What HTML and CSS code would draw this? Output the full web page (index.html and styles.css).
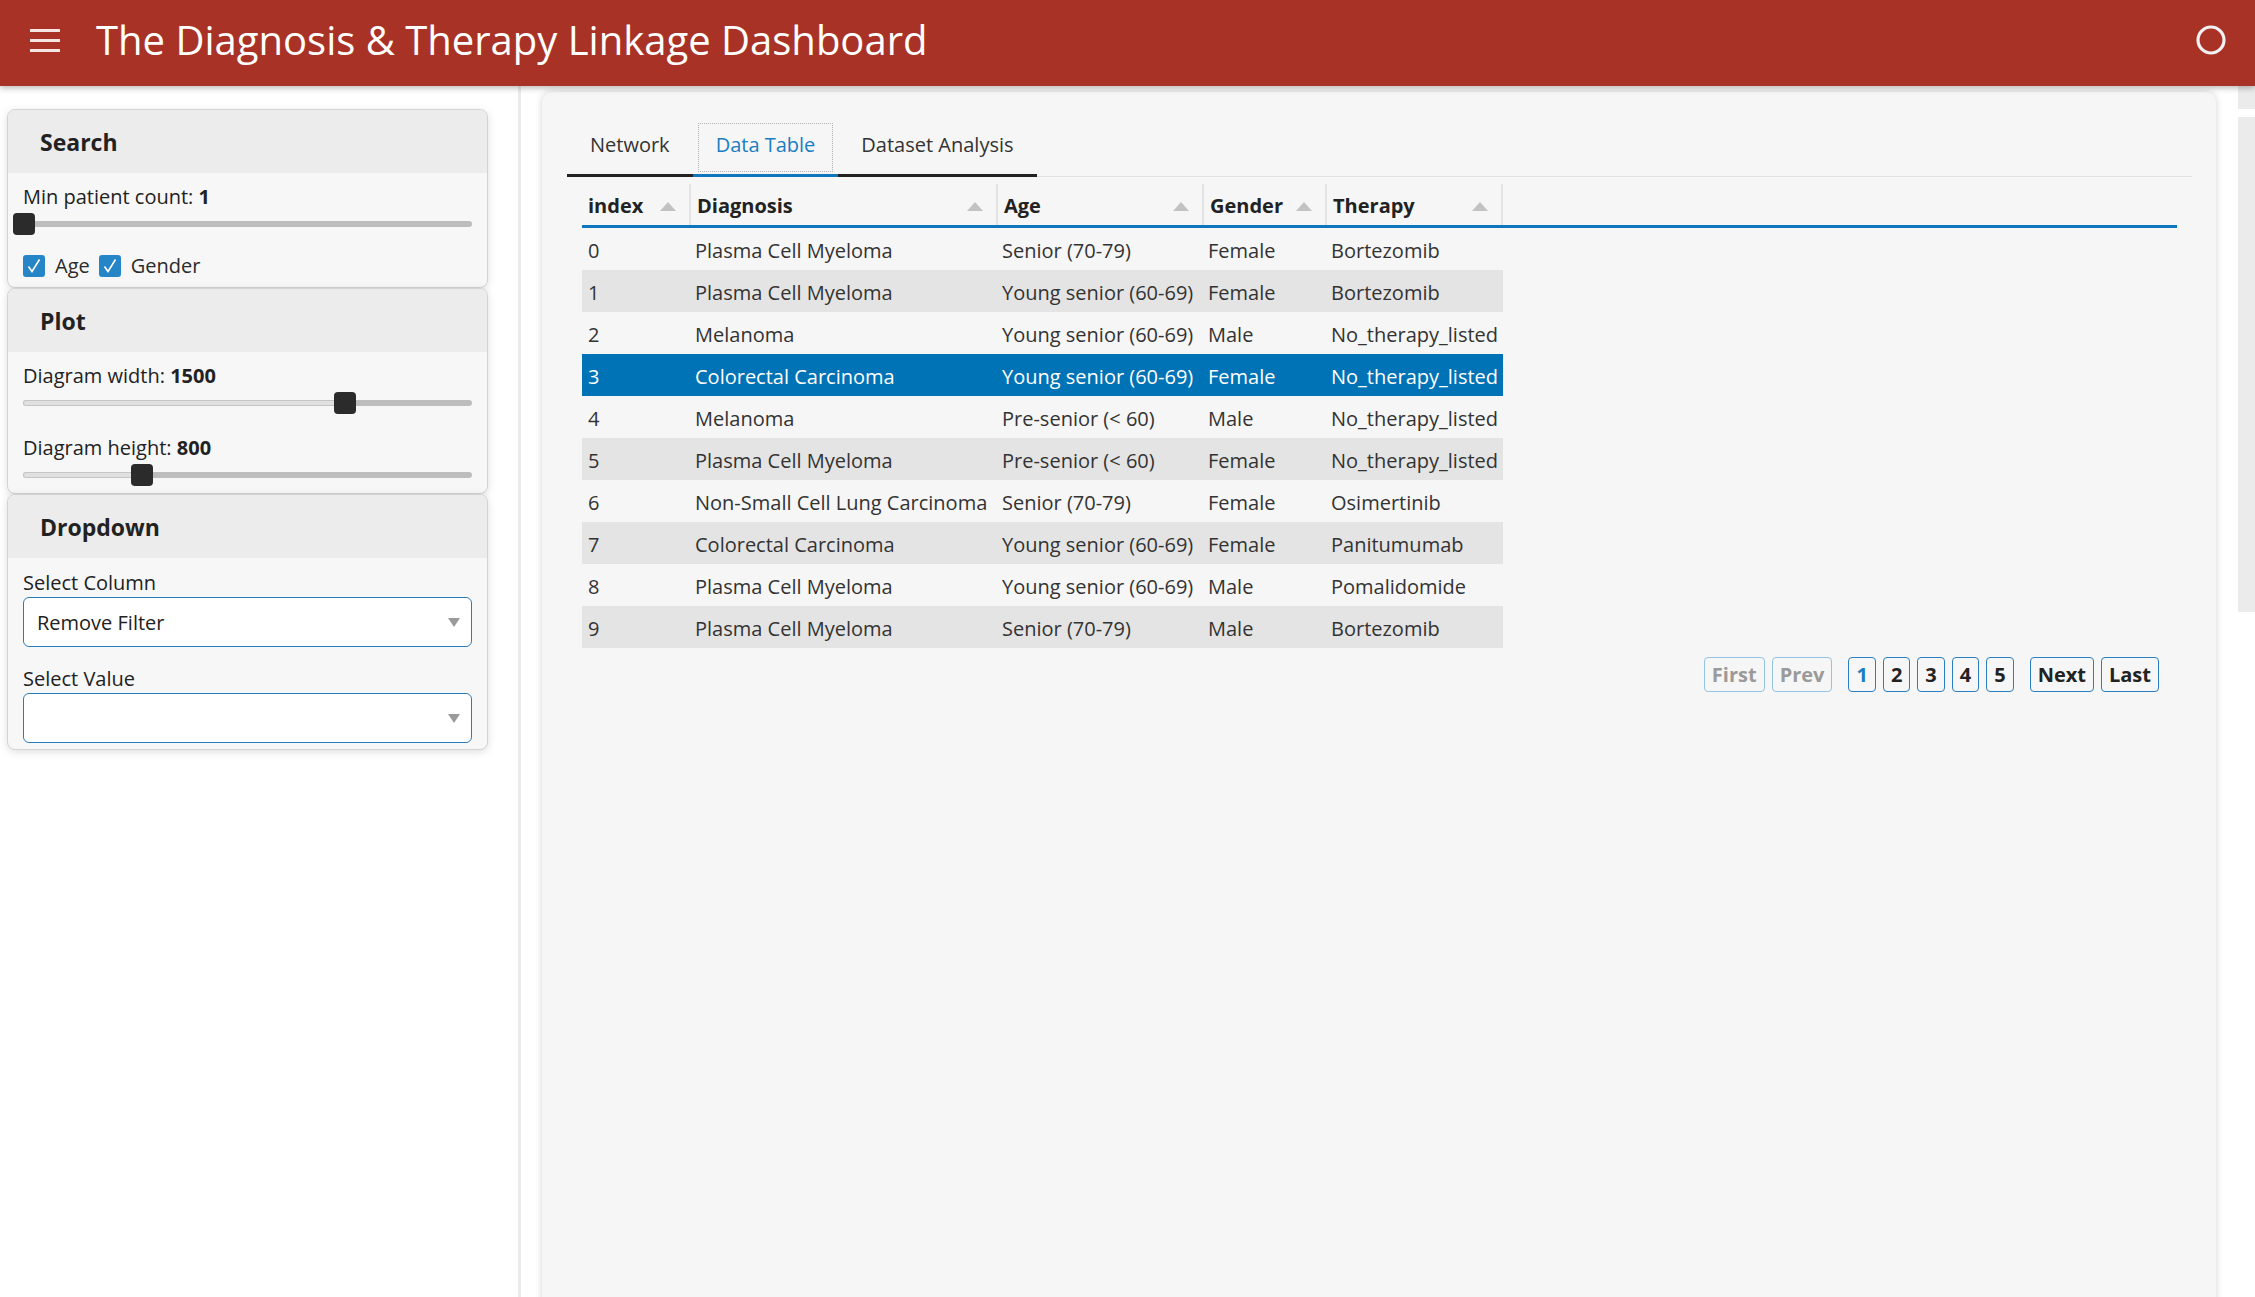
FILE: index.html
```html
<!DOCTYPE html>
<html lang="en">
<head>
<meta charset="utf-8">
<title>The Diagnosis &amp; Therapy Linkage Dashboard</title>
<link rel="stylesheet" href="styles.css">
</head>
<body>
<header class="topbar">
  <div class="burger"><span></span><span></span><span></span></div>
  <h1 class="title">The Diagnosis &amp; Therapy Linkage Dashboard</h1>
  <svg class="status" width="32" height="32" viewBox="0 0 32 32"><circle cx="16" cy="16" r="13" fill="none" stroke="#f1f1f1" stroke-width="3.2"/></svg>
</header>
<div class="layout">
  <aside class="sidebar">
    <section class="card">
      <div class="card-head">Search</div>
      <div class="card-body search-body">
        <div class="lbl">Min patient count: <b>1</b></div>
        <div class="slider" style="--v:0%"><div class="track"><div class="fill"></div></div><div class="thumb"></div></div>
        <div class="checks">
          <label class="check"><span class="box"><svg width="22" height="22" viewBox="0 0 22 22"><path d="M5.5 11.5 L9 16.5 L16.5 4.5" fill="none" stroke="#fff" stroke-width="1.6"/></svg></span>Age</label>
          <label class="check"><span class="box"><svg width="22" height="22" viewBox="0 0 22 22"><path d="M5.5 11.5 L9 16.5 L16.5 4.5" fill="none" stroke="#fff" stroke-width="1.6"/></svg></span>Gender</label>
        </div>
      </div>
    </section>
    <section class="card">
      <div class="card-head">Plot</div>
      <div class="card-body plot-body">
        <div class="lbl">Diagram width: <b>1500</b></div>
        <div class="slider" style="--v:71.5%"><div class="track"><div class="fill"></div></div><div class="thumb"></div></div>
        <div class="lbl">Diagram height: <b>800</b></div>
        <div class="slider" style="--v:26.2%"><div class="track"><div class="fill"></div></div><div class="thumb"></div></div>
      </div>
    </section>
    <section class="card">
      <div class="card-head">Dropdown</div>
      <div class="card-body dd-body">
        <div class="lbl">Select Column</div>
        <div class="select"><span>Remove Filter</span><span class="caret"></span></div>
        <div class="lbl">Select Value</div>
        <div class="select"><span></span><span class="caret"></span></div>
      </div>
    </section>
  </aside>
  <main class="main">
    <div class="panel">
      <nav class="tabs">
        <div class="tab">Network</div>
        <div class="tab active">Data Table</div>
        <div class="tab">Dataset Analysis</div>
      </nav>
      <div class="dt">
        <div class="dt-head">
          <div class="th"><span>index</span><span class="sort"></span></div>
          <div class="th"><span>Diagnosis</span><span class="sort"></span></div>
          <div class="th"><span>Age</span><span class="sort"></span></div>
          <div class="th"><span>Gender</span><span class="sort"></span></div>
          <div class="th"><span>Therapy</span><span class="sort"></span></div>
        </div>
        <div class="dt-body">
          <div class="tr"><div class="td">0</div><div class="td">Plasma Cell Myeloma</div><div class="td">Senior (70-79)</div><div class="td">Female</div><div class="td">Bortezomib</div></div>
          <div class="tr"><div class="td">1</div><div class="td">Plasma Cell Myeloma</div><div class="td">Young senior (60-69)</div><div class="td">Female</div><div class="td">Bortezomib</div></div>
          <div class="tr"><div class="td">2</div><div class="td">Melanoma</div><div class="td">Young senior (60-69)</div><div class="td">Male</div><div class="td">No_therapy_listed</div></div>
          <div class="tr sel"><div class="td">3</div><div class="td">Colorectal Carcinoma</div><div class="td">Young senior (60-69)</div><div class="td">Female</div><div class="td">No_therapy_listed</div></div>
          <div class="tr"><div class="td">4</div><div class="td">Melanoma</div><div class="td">Pre-senior (&lt; 60)</div><div class="td">Male</div><div class="td">No_therapy_listed</div></div>
          <div class="tr"><div class="td">5</div><div class="td">Plasma Cell Myeloma</div><div class="td">Pre-senior (&lt; 60)</div><div class="td">Female</div><div class="td">No_therapy_listed</div></div>
          <div class="tr"><div class="td">6</div><div class="td">Non-Small Cell Lung Carcinoma</div><div class="td">Senior (70-79)</div><div class="td">Female</div><div class="td">Osimertinib</div></div>
          <div class="tr"><div class="td">7</div><div class="td">Colorectal Carcinoma</div><div class="td">Young senior (60-69)</div><div class="td">Female</div><div class="td">Panitumumab</div></div>
          <div class="tr"><div class="td">8</div><div class="td">Plasma Cell Myeloma</div><div class="td">Young senior (60-69)</div><div class="td">Male</div><div class="td">Pomalidomide</div></div>
          <div class="tr"><div class="td">9</div><div class="td">Plasma Cell Myeloma</div><div class="td">Senior (70-79)</div><div class="td">Male</div><div class="td">Bortezomib</div></div>
        </div>
        <div class="pager">
          <span class="pg off">First</span>
          <span class="pg off">Prev</span>
          <span class="pg cur first-num">1</span>
          <span class="pg">2</span>
          <span class="pg">3</span>
          <span class="pg">4</span>
          <span class="pg">5</span>
          <span class="pg next">Next</span>
          <span class="pg">Last</span>
        </div>
      </div>
    </div>
  </main>
  <div class="rail"><div class="rail-top"></div><div class="rail-bar"></div></div>
</div>
</body>
</html>
```
FILE: styles.css
```css
* { box-sizing: border-box; }
html, body { height: 100%; }
body {
  margin: 0;
  font-family: "Open Sans", "Noto Sans", sans-serif;
  font-size: 20px;
  color: #2b2b2b;
  background: #fff;
  overflow: hidden;
}

/* top bar */
.topbar {
  height: 86px;
  background: #a83226;
  display: flex;
  align-items: center;
  padding: 0 28px 6px 30px;
  box-shadow: 0 2px 6px rgba(0, 0, 0, 0.28);
  position: relative;
  z-index: 2;
}
.burger {
  width: 30px;
  height: 23px;
  display: flex;
  flex-direction: column;
  justify-content: space-between;
}
.burger span {
  display: block;
  height: 3px;
  background: rgba(255, 255, 255, 0.88);
}
.title {
  margin: 0 0 0 36px;
  font-size: 40px;
  font-weight: 400;
  line-height: 48px;
  color: #fff;
}
.status { margin-left: auto; }

/* layout */
.layout {
  display: flex;
  height: calc(100% - 86px);
}
.sidebar {
  width: 521px;
  flex: none;
  border-right: 3px solid #ebebeb;
  padding: 23px 0 0 7px;
}
.main {
  flex: 1;
  min-width: 0;
  padding: 6px 22px 0 21px;
}
.rail {
  width: 17px;
  flex: none;
}
.rail-top { height: 23px; background: #ebebeb; }
.rail-bar { height: 495px; margin-top: 8px; background: #ebebeb; }

/* sidebar cards */
.card {
  width: 481px;
  border: 1px solid #d3d3d3;
  border-radius: 8px;
  background: #f7f7f7;
  box-shadow: 0 2px 9px rgba(0, 0, 0, 0.13);
  overflow: hidden;
}
.card-head {
  height: 63px;
  background: #ececec;
  display: flex;
  align-items: center;
  padding: 1px 0 0 32px;
  font-size: 23px;
  font-weight: 700;
  color: #222;
}
.search-body { padding: 12px 15px 9px; }
.plot-body { padding: 12px 15px 7px; }
.dd-body { padding: 13px 15px 6px; }

.lbl { line-height: 24px; height: 24px; white-space: nowrap; color: #222; }
.lbl b { font-weight: 700; }
.lbl + .slider { margin-top: 4px; }
.slider + .lbl { margin-top: 22px; }
.slider + .checks { margin-top: 19px; }
.lbl + .select { margin-top: 2px; }
.select + .lbl { margin-top: 20px; }

.slider {
  position: relative;
  height: 22px;
}
.track {
  position: absolute;
  left: 0;
  right: 0;
  top: 8px;
  height: 6px;
  background: #bdbdbd;
  border-radius: 3px;
  overflow: hidden;
}
.fill {
  height: 100%;
  width: var(--v);
  background: #e1e1e1;
  box-shadow: inset 0 0 0 1px #c5c5c5;
  border-radius: 3px;
}
.thumb {
  position: absolute;
  top: 0;
  left: calc(var(--v) - 10px);
  width: 22px;
  height: 22px;
  background: #2b2b2b;
  border-radius: 4px;
}

.checks {
  display: flex;
  align-items: center;
  height: 24px;
}
.check {
  display: flex;
  align-items: center;
  margin-right: 9px;
  line-height: 24px;
}
.box {
  width: 22px;
  height: 22px;
  border-radius: 3px;
  background: #2585c7;
  margin-right: 10px;
  display: block;
}
.box svg { display: block; }

.select {
  height: 50px;
  border: 1.5px solid #2b7bba;
  border-radius: 6px;
  background: #fff;
  display: flex;
  align-items: center;
  justify-content: space-between;
  padding: 0 11px 0 13px;
  color: #222;
}
.caret {
  width: 0;
  height: 0;
  border-left: 6px solid transparent;
  border-right: 6px solid transparent;
  border-top: 9px solid #9a9a9a;
}

/* main panel */
.panel {
  background: #f6f6f6;
  border-radius: 10px;
  box-shadow: 0 0 7px rgba(0, 0, 0, 0.18);
  height: calc(100% + 40px);
  padding: 26px 24px 0 25px;
}
.tabs {
  display: flex;
  border-bottom: 1px solid #e1e1e1;
}
.tab {
  padding: 15px 23px 17px;
  line-height: 24px;
  border-bottom: 3px solid #222;
  margin-bottom: -1px;
  color: #333;
  white-space: nowrap;
}
.tab.active {
  color: #1b7dc2;
  border-bottom-color: #0d76bd;
  outline: 1px dotted #b3b3b3;
  outline-offset: -6px;
}

.dt { margin: 7px 15px 0; }
.dt-head,
.tr {
  display: grid;
  grid-template-columns: 107px 307px 206px 123px 178px;
}
.dt-head { border-bottom: 3px solid #0d76bd; }
.th {
  display: flex;
  align-items: center;
  justify-content: space-between;
  padding: 10px 13px 7px 6px;
  line-height: 24px;
  font-weight: 700;
  color: #222;
  border-left: 2px solid #e3e3e3;
}
.th:first-child { border-left: 0; }
.th:last-child { border-right: 2px solid #e3e3e3; }
.sort {
  width: 0;
  height: 0;
  border-left: 8.5px solid transparent;
  border-right: 8.5px solid transparent;
  border-bottom: 9px solid #c2c2c2;
}
.dt-body { width: 921px; }
.tr { height: 42px; color: #333; }
.tr:nth-child(even) { background: #e4e4e4; }
.tr.sel { background: #0072b6; color: #fff; }
.td {
  padding: 11px 6px 7px;
  line-height: 24px;
  white-space: nowrap;
}

.pager {
  display: flex;
  justify-content: flex-end;
  gap: 7px;
  margin: 9px 18px 0 0;
}
.pg {
  height: 35px;
  border: 1px solid #2a7fc0;
  border-radius: 4px;
  padding: 1px 7px 0;
  font-weight: 700;
  display: flex;
  align-items: center;
  color: #222;
  line-height: 1;
}
.pg.off { color: #9a9a9a; border-color: #93c4e6; }
.pg.cur { color: #1b7dc2; }
.pg.first-num, .pg.next { margin-left: 9px; }
```
